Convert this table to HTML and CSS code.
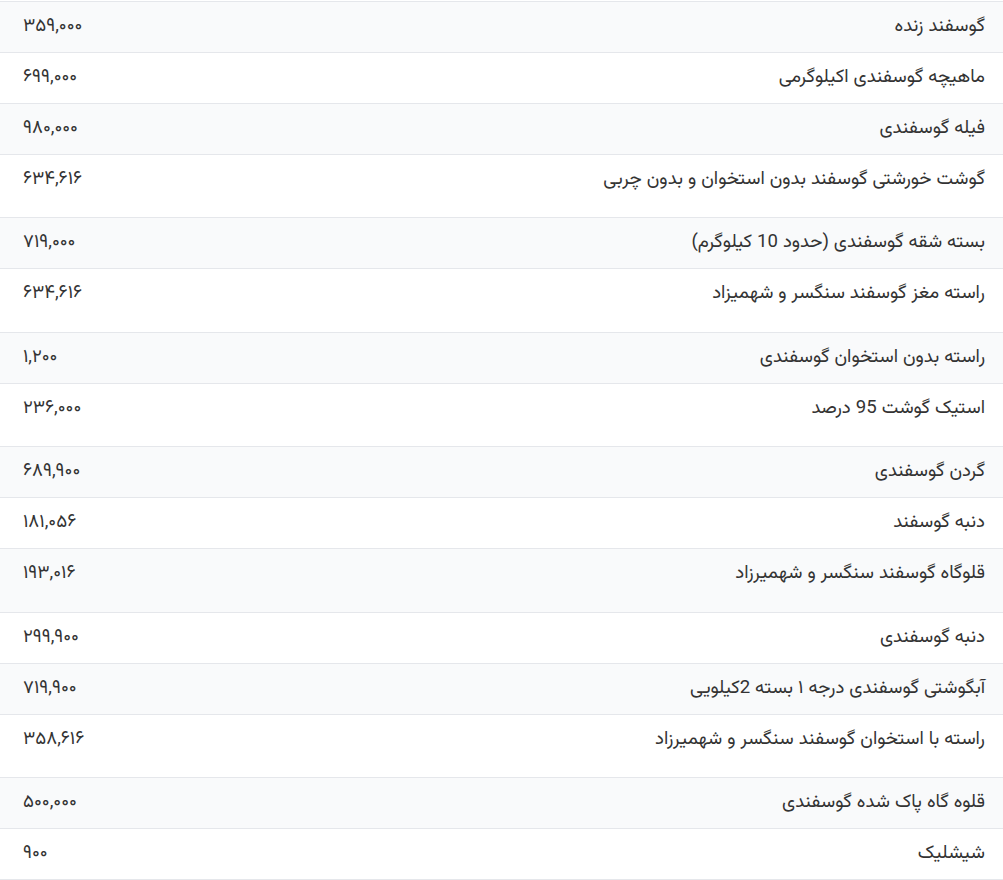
FILE: index.html
```html
<!DOCTYPE html>
<html lang="fa" dir="rtl">
<head>
<meta charset="utf-8">
<title>قیمت گوشت گوسفندی</title>
<link rel="stylesheet" href="styles.css">
</head>
<body>
<table class="prices">
  <tbody>
    <tr><td class="name">گوسفند زنده</td><td class="price">۳۵۹,۰۰۰</td></tr>
    <tr><td class="name">ماهیچه گوسفندی اکیلوگرمی</td><td class="price">۶۹۹,۰۰۰</td></tr>
    <tr><td class="name">فیله گوسفندی</td><td class="price">۹۸۰,۰۰۰</td></tr>
    <tr class="tall"><td class="name">گوشت خورشتی گوسفند بدون استخوان و بدون چربی</td><td class="price">۶۳۴,۶۱۶</td></tr>
    <tr><td class="name">بسته شقه گوسفندی (حدود 10 کیلوگرم)</td><td class="price">۷۱۹,۰۰۰</td></tr>
    <tr class="tall taller"><td class="name">راسته مغز گوسفند سنگسر و شهمیزاد</td><td class="price">۶۳۴,۶۱۶</td></tr>
    <tr><td class="name">راسته بدون استخوان گوسفندی</td><td class="price">۱,۲۰۰</td></tr>
    <tr class="tall"><td class="name">استیک گوشت 95 درصد</td><td class="price">۲۳۶,۰۰۰</td></tr>
    <tr><td class="name">گردن گوسفندی</td><td class="price">۶۸۹,۹۰۰</td></tr>
    <tr><td class="name">دنبه گوسفند</td><td class="price">۱۸۱,۰۵۶</td></tr>
    <tr class="tall taller"><td class="name">قلوگاه گوسفند سنگسر و شهمیرزاد</td><td class="price">۱۹۳,۰۱۶</td></tr>
    <tr><td class="name">دنبه گوسفندی</td><td class="price">۲۹۹,۹۰۰</td></tr>
    <tr><td class="name">آبگوشتی گوسفندی درجه ۱ بسته 2کیلویی</td><td class="price">۷۱۹,۹۰۰</td></tr>
    <tr class="tall"><td class="name">راسته با استخوان گوسفند سنگسر و شهمیرزاد</td><td class="price">۳۵۸,۶۱۶</td></tr>
    <tr><td class="name">قلوه گاه پاک شده گوسفندی</td><td class="price">۵۰۰,۰۰۰</td></tr>
    <tr><td class="name">شیشلیک</td><td class="price">۹۰۰</td></tr>
  </tbody>
</table>
</body>
</html>
```
FILE: styles.css
```css
html, body {
  margin: 0;
  padding: 0;
  background: #ffffff;
}
body {
  padding-top: 1px;
  font-family: Vazirmatn, "Noto Sans Arabic", "DejaVu Sans", sans-serif;
  color: #333333;
  font-size: 18.6px;
}
.prices {
  width: 100%;
  border-collapse: collapse;
  direction: rtl;
}
.prices tr {
  border-top: 1px solid #e5e7eb;
  border-bottom: 1px solid #e5e7eb;
}
.prices tbody tr:nth-child(odd) {
  background: #f9fafb;
}
.prices td {
  height: 50px;
  box-sizing: border-box;
  padding: 0;
  line-height: 24px;
  vertical-align: top;
}
.prices td.name {
  padding: 13px 18px 13px 16px;
  text-align: right;
}
.prices td.price {
  padding: 13px 16px 13px 23px;
  text-align: left;
  width: 200px;
}
.prices tr.tall td {
  height: 63px;
}
.prices tr.taller td {
  height: 64px;
}
```
